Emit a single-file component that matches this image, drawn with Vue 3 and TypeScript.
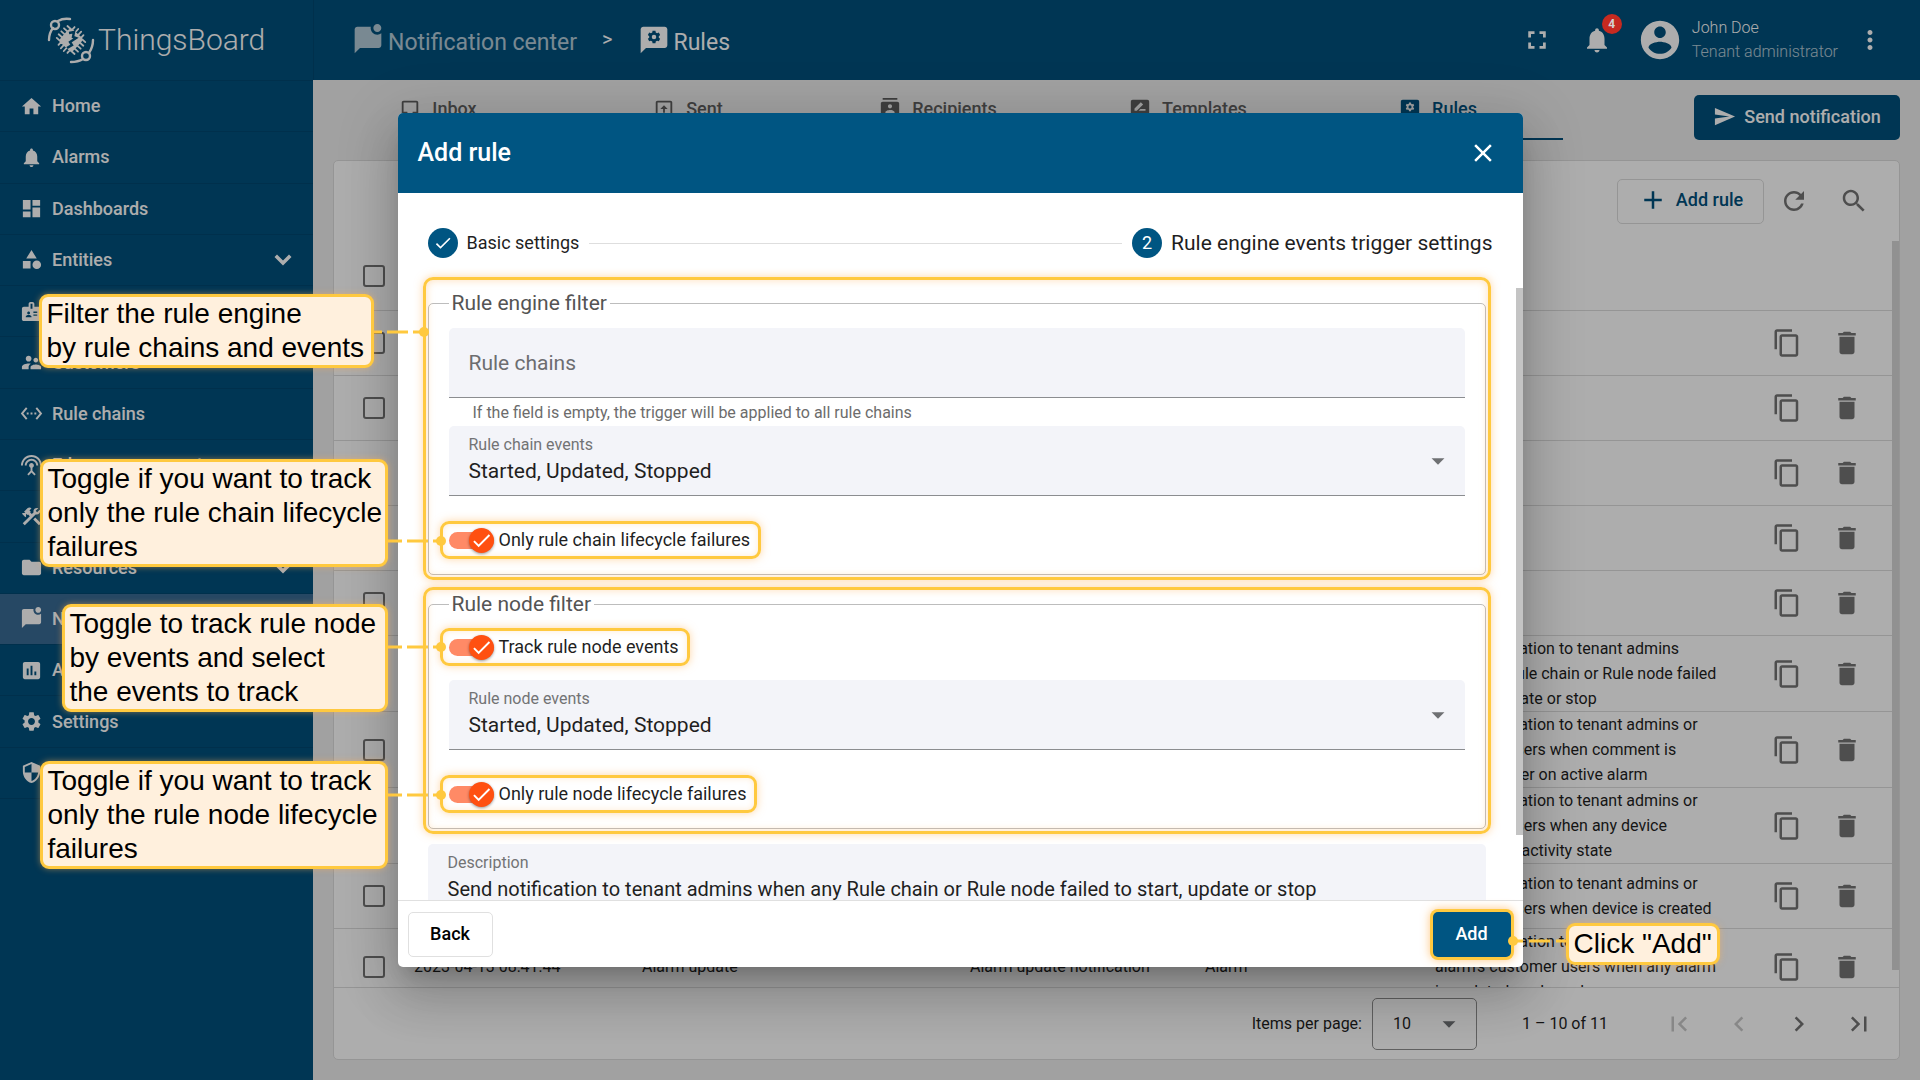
<script setup lang="ts">
import { h, ref } from 'vue'

const paths: Record<string, string> = {
  home: 'M10 20v-6h4v6h5v-8h3L12 3 2 12h3v8z',
  bell: 'M12 22c1.1 0 2-.9 2-2h-4c0 1.1.89 2 2 2zm6-6v-5c0-3.07-1.64-5.64-4.5-6.32V4c0-.83-.67-1.5-1.5-1.5s-1.5.67-1.5 1.5v.68C7.63 5.36 6 7.92 6 11v5l-2 2v1h16v-1l-2-2z',
  dashboard: 'M3 13h8V3H3v10zm0 8h8v-6H3v6zm10 0h8V11h-8v10zm0-18v6h8V3h-8z',
  category: 'M12 2l-5.5 9h11zM17.5 13a4.5 4.5 0 1 0 0 9 4.5 4.5 0 0 0 0-9zM3 13.500h8v8H3z',
  badge: 'M20 7h-5V4c0-1.1-.9-2-2-2h-2c-1.100 0-2 .9-2 2v3H4c-1.100 0-2 .9-2 2v11c0 1.100.9 2 2 2h16c1.100 0 2-.9 2-2V9c0-1.100-.9-2-2-2zM9 12c.83 0 1.500.67 1.500 1.500S9.830 15 9 15s-1.500-.67-1.500-1.500S8.170 12 9 12zm3 6H6v-.43c0-.6.36-1.150.92-1.390.65-.28 1.340-.43 2.080-.43s1.430.15 2.080.43c.55.24.92.78.92 1.390V18zm1-9h-2V4h2v5zm5 7.500h-4V15h4v1.500zm0-3h-4V12h4v1.500z',
  people: 'M16.500 12c1.380 0 2.490-1.120 2.490-2.500S17.880 7 16.500 7C15.120 7 14 8.120 14 9.500s1.120 2.500 2.500 2.500zM9 11c1.660 0 2.990-1.340 2.990-3S10.660 5 9 5C7.340 5 6 6.340 6 8s1.340 3 3 3zm7.500 3c-1.830 0-5.500.92-5.500 2.750V19h11v-2.250c0-1.830-3.670-2.750-5.500-2.750zM9 13c-2.330 0-7 1.170-7 3.500V19h7v-2.250c0-.85.33-2.340 2.370-3.470C10.500 13.100 9.660 13 9 13z',
  ethernet: 'M7.77 6.76L6.23 5.48.82 12l5.41 6.52 1.54-1.28L3.42 12l4.35-5.24zM7 13h2v-2H7v2zm10-2h-2v2h2v-2zm-6 2h2v-2h-2v2zm6.77-7.52l-1.54 1.28L20.58 12l-4.35 5.24 1.54 1.28L23.18 12l-5.41-6.52z',
  antenna: 'M12 5c-3.87 0-7 3.13-7 7h2c0-2.76 2.24-5 5-5s5 2.24 5 5h2c0-3.87-3.13-7-7-7zm1 9.29c.88-.39 1.5-1.26 1.5-2.29 0-1.38-1.12-2.5-2.5-2.5S9.5 10.62 9.5 12c0 1.02.62 1.9 1.5 2.29v3.3L7.59 21 9 22.41l3-3 3 3L16.41 21 13 17.59v-3.3zM12 1C5.93 1 1 5.93 1 12h2c0-4.97 4.03-9 9-9s9 4.03 9 9h2c0-6.07-4.93-11-11-11z',
  construction: 'M13.78 15.17l2.12-2.12 6 6-2.12 2.12zM17.5 10c1.93 0 3.5-1.57 3.5-3.5 0-.58-.16-1.12-.41-1.6l-2.7 2.7-1.49-1.49 2.7-2.7c-.48-.25-1.02-.41-1.6-.41C15.57 3 14 4.57 14 6.5c0 .41.08.8.21 1.16l-1.85 1.85-1.78-1.78.71-.71-1.41-1.41L12 3.49c-1.17-1.17-3.07-1.17-4.24 0L4.22 7.03l1.41 1.41H2.81L2.1 9.15l3.54 3.54.71-.71V9.15l1.41 1.41.71-.71 1.78 1.78-7.41 7.41 2.12 2.12L16.34 9.79c.36.13.75.21 1.16.21z',
  folder: 'M10 4H4c-1.1 0-1.99.9-1.99 2L2 18c0 1.1.9 2 2 2h16c1.1 0 2-.9 2-2V8c0-1.1-.9-2-2-2h-8l-2-2z',
  chat: 'M22 6.98V16c0 1.1-.9 2-2 2H6l-4 4V4c0-1.1.9-2 2-2h10.1c-.06.32-.1.66-.1 1 0 2.76 2.24 5 5 5 1.13 0 2.16-.39 3-1.02zM16 3c0 1.66 1.34 3 3 3s3-1.34 3-3-1.34-3-3-3-3 1.34-3 3z',
  chart: 'M19 3H5c-1.1 0-2 .9-2 2v14c0 1.1.9 2 2 2h14c1.1 0 2-.9 2-2V5c0-1.1-.9-2-2-2zM9 17H7v-7h2v7zm4 0h-2V7h2v10zm4 0h-2v-4h2v4z',
  settings: 'M19.14 12.94c.04-.3.06-.61.06-.94 0-.32-.02-.64-.07-.94l2.03-1.58c.18-.14.23-.41.12-.61l-1.92-3.32c-.12-.22-.37-.29-.59-.22l-2.39.96c-.5-.38-1.03-.7-1.62-.94l-.36-2.54c-.04-.24-.24-.41-.48-.41h-3.84c-.24 0-.43.17-.47.41l-.36 2.54c-.59.24-1.13.57-1.62.94l-2.39-.96c-.22-.08-.47 0-.59.22L2.74 8.87c-.12.21-.08.47.12.61l2.03 1.58c-.05.3-.09.63-.09.94s.02.64.07.94l-2.03 1.58c-.18.14-.23.41-.12.61l1.92 3.32c.12.22.37.29.59.22l2.39-.96c.5.38 1.03.7 1.62.94l.36 2.54c.05.24.24.41.48.41h3.84c.24 0 .44-.17.47-.41l.36-2.54c.59-.24 1.13-.56 1.62-.94l2.39.96c.22.08.47 0 .59-.22l1.92-3.32c.12-.22.07-.47-.12-.61l-2.01-1.58zM12 15.6c-1.98 0-3.6-1.62-3.6-3.6s1.62-3.6 3.6-3.6 3.6 1.62 3.6 3.6-1.62 3.6-3.6 3.6z',
  security: 'M12 1L3 5v6c0 5.55 3.84 10.74 9 12 5.16-1.26 9-6.45 9-12V5l-9-4zm0 10.99h7c-.53 4.12-3.28 7.79-7 8.94V12H5V6.3l7-3.11v8.8z',
  chevronDown: 'M12 17.5L3.500 9 6 6.500l6 6 6-6L20.500 9z',
  fullscreen: 'M5 5h5v2.200H7.200V10H5zM14 5h5v5h-2.200V7.200H14zM5 14h2.200v2.800H10V19H5zM16.800 14H19v5h-5v-2.200h2.800z',
  account: 'M12 2C6.48 2 2 6.48 2 12s4.48 10 10 10 10-4.48 10-10S17.52 2 12 2zm0 3c1.66 0 3 1.34 3 3s-1.34 3-3 3-3-1.34-3-3 1.34-3 3-3zm0 14.2c-2.5 0-4.71-1.28-6-3.22.03-1.99 4-3.08 6-3.08 1.99 0 5.97 1.09 6 3.08-1.29 1.94-3.5 3.22-6 3.22z',
  more: 'M12 8c1.1 0 2-.9 2-2s-.9-2-2-2-2 .9-2 2 .9 2 2 2zm0 2c-1.1 0-2 .9-2 2s.9 2 2 2 2-.9 2-2-.9-2-2-2zm0 6c-1.1 0-2 .9-2 2s.9 2 2 2 2-.9 2-2-.9-2-2-2z',
  send: 'M2.010 21L23 12 2.010 3 2 10l15 2-15 2z',
  add: 'M19 13h-6v6h-2v-6H5v-2h6V5h2v6h6v2z',
  refresh: 'M17.65 6.35C16.2 4.9 14.21 4 12 4c-4.42 0-7.99 3.58-7.99 8s3.57 8 7.99 8c3.73 0 6.84-2.55 7.73-6h-2.08c-.82 2.33-3.04 4-5.65 4-3.31 0-6-2.69-6-6s2.69-6 6-6c1.66 0 3.14.69 4.22 1.78L13 11h7V4l-2.35 2.35z',
  search: 'M15.5 14h-.79l-.28-.27C15.41 12.59 16 11.11 16 9.5 16 5.91 13.09 3 9.5 3S3 5.91 3 9.5 5.91 16 9.5 16c1.61 0 3.09-.59 4.23-1.57l.27.28v.79l5 4.99L20.49 19l-4.99-5zm-6 0C7.01 14 5 11.99 5 9.5S7.01 5 9.5 5 14 7.01 14 9.5 11.99 14 9.5 14z',
  copy: 'M16 1H4c-1.1 0-2 .9-2 2v14h2V3h12V1zm3 4H8c-1.1 0-2 .9-2 2v14c0 1.1.9 2 2 2h11c1.1 0 2-.9 2-2V7c0-1.1-.9-2-2-2zm0 16H8V7h11v14z',
  trash: 'M6 19c0 1.1.9 2 2 2h8c1.1 0 2-.9 2-2V7H6v12zM19 4h-3.5l-1-1h-5l-1 1H5v2h14V4z',
  inbox: 'M19 3H5c-1.1 0-2 .9-2 2v14c0 1.1.9 2 2 2h14c1.1 0 2-.9 2-2V5c0-1.1-.9-2-2-2zm0 12h-4c0 1.66-1.35 3-3 3s-3-1.34-3-3H5V5h14v10z',
  outbox: 'M19 3H5c-1.1 0-2 .9-2 2v14c0 1.1.9 2 2 2h14c1.1 0 2-.9 2-2V5c0-1.1-.9-2-2-2zm0 16H5V5h14v14zM11 16h2v-4h3l-4-4-4 4h3z',
  contacts: 'M20 0H4v2h16V0zM4 24h16v-2H4v2zM20 4H4c-1.1 0-2 .9-2 2v12c0 1.1.9 2 2 2h16c1.1 0 2-.9 2-2V6c0-1.1-.9-2-2-2zm-8 2.75c1.24 0 2.25 1.01 2.25 2.25s-1.01 2.25-2.25 2.25S9.75 10.24 9.75 9 10.76 6.75 12 6.75zM17 17H7v-1.5c0-1.67 3.33-2.5 5-2.5s5 .83 5 2.5V17z',
  draft: 'M20 2H4c-1.1 0-2 .9-2 2v18l4-4h14c1.100 0 2-.9 2-2V4c0-1.100-.9-2-2-2zM6 14v-2.500l6.900-6.900 2.500 2.500L8.500 14H6zm12 0h-7.500l2-2H18v2z',
  ruleChat: 'M20 2H4c-1.1 0-2 .9-2 2v18l4-4h14c1.1 0 2-.9 2-2V4c0-1.1-.9-2-2-2zM13.100 5l.2 1.300 1 .6 1.300-.5 1 1.900-1 .8v1.200l1 .8-1 1.900-1.300-.5-1 .6-.2 1.400h-2.200l-.2-1.400-1-.6-1.300.5-1-1.900 1-.8V9.100l-1-.8 1-1.900 1.300.5 1-.6.2-1.300zM12 8a1.700 1.700 0 1 0 0 3.400A1.700 1.700 0 0 0 12 8z',
  first: 'M18.41 16.59L13.82 12l4.59-4.59L17 6l-6 6 6 6zM6 6h2v12H6z',
  prev: 'M15.41 7.41L14 6l-6 6 6 6 1.41-1.41L10.83 12z',
  next: 'M10 6L8.59 7.41 13.17 12l-4.58 4.59L10 18l6-6z',
  last: 'M5.59 7.41L10.18 12l-4.59 4.59L7 18l6-6-6-6zM16 6h2v12h-2z',
  close: 'M19 6.41L17.59 5 12 10.59 6.41 5 5 6.41 10.59 12 5 17.59 6.41 19 12 13.41 17.59 19 19 17.59 13.41 12z',
  check: 'M9 16.17L4.830 12l-1.420 1.410L9 19 21 7l-1.410-1.410z',
  caret: 'M5 9l7 7 7-7z',
}

const Icon = (props: { name: string }) =>
  h('svg', { viewBox: '0 0 24 24', 'aria-hidden': 'true', fill: 'currentColor', 'fill-rule': 'evenodd' }, [
    h('path', { d: paths[props.name] }),
  ])

interface MenuItem { label: string; icon: string; open?: boolean; active?: boolean }

const menu: MenuItem[] = [
  { label: 'Home', icon: 'home' },
  { label: 'Alarms', icon: 'bell' },
  { label: 'Dashboards', icon: 'dashboard' },
  { label: 'Entities', icon: 'category', open: true },
  { label: 'Profiles', icon: 'badge' },
  { label: 'Customers', icon: 'people' },
  { label: 'Rule chains', icon: 'ethernet' },
  { label: 'Edge management', icon: 'antenna' },
  { label: 'Advanced', icon: 'construction' },
  { label: 'Resources', icon: 'folder', open: true },
  { label: 'Notification', icon: 'chat', active: true },
  { label: 'Api Usage', icon: 'chart' },
  { label: 'Settings', icon: 'settings' },
  { label: 'Security', icon: 'security' },
]

const tabs = [
  { label: 'Inbox', icon: 'inbox' },
  { label: 'Sent', icon: 'outbox' },
  { label: 'Recipients', icon: 'contacts' },
  { label: 'Templates', icon: 'draft' },
  { label: 'Rules', icon: 'ruleChat' },
]

interface Row { time?: string; name?: string; template?: string; trigger?: string; text?: string }

const rows: Row[] = [
  {}, {}, {}, {}, {},
  { text: 'Send notification to tenant admins when any Rule chain or Rule node failed to start, update or stop' },
  { text: 'Send notification to tenant admins or customer users when comment is added by user on active alarm' },
  { text: 'Send notification to tenant admins or customer users when any device changed its activity state' },
  { text: 'Send notification to tenant admins or customer users when device is created' },
  {
    time: '2023-04-13 08:41:44',
    name: 'Alarm update',
    template: 'Alarm update notification',
    trigger: 'Alarm',
    text: "Send notification to tenant admins or alarm's customer users when any alarm is updated or cleared",
  },
]

const chains = ref('')
const onlyChainFailures = ref(true)
const trackNodes = ref(true)
const onlyNodeFailures = ref(true)
const description = ref('Send notification to tenant admins when any Rule chain or Rule node failed to start, update or stop')
</script>

<template>
  <div class="app">
    <aside class="sidebar">
      <a href="#" class="logo">
        <svg class="logo-mark" viewBox="0 0 48 48" aria-hidden="true" fill="none" stroke="currentColor" stroke-width="2.4" stroke-linecap="round">
          <circle cx="8" cy="9" r="4" />
          <path d="M11 5Q16 2 23 3M6 12Q2 17 2 24" />
          <circle cx="39" cy="40" r="4" />
          <path d="M42 37Q46 31 46 24M36 43Q31 46 24 46" />
          <g transform="rotate(42 24 24)">
            <path d="M18 12v24M22 11v26M26 11v26M30 12v24M11 20h26M11 24h26M11 28h26M12 32h24M12 16h24" stroke-width="1.8" />
            <rect x="15" y="15" width="18" height="18" rx="4" fill="currentColor" stroke="none" />
          </g>
          <path d="M22 17l5-1-1 5 3 1-6 4 2 3-5 3" stroke="#00507c" stroke-width="2.4" stroke-linecap="butt" />
        </svg>
        <span>ThingsBoard</span>
      </a>
      <nav class="menu">
        <a v-for="item in menu" :key="item.label" href="#" class="menu-item" :class="{ active: item.active }">
          <Icon :name="item.icon" class="menu-icon" />
          <span class="menu-label">{{ item.label }}</span>
          <Icon v-if="item.open" name="chevronDown" class="menu-arrow" />
        </a>
      </nav>
    </aside>

    <div class="main">
      <header class="topbar">
        <nav class="crumbs">
          <a href="#" class="crumb parent"><Icon name="chat" class="crumb-icon" /><span>Notification center</span></a>
          <span class="crumb-sep">&gt;</span>
          <a href="#" class="crumb"><Icon name="ruleChat" class="crumb-icon" /><span>Rules</span></a>
        </nav>
        <div class="account">
          <button class="icon-btn" aria-label="Fullscreen"><Icon name="fullscreen" class="icon-lg" /></button>
          <button class="icon-btn bell" aria-label="Notifications">
            <Icon name="bell" class="icon-lg" /><span class="badge">4</span>
          </button>
          <Icon name="account" class="avatar" />
          <div class="user"><span>John Doe</span><span class="role">Tenant administrator</span></div>
          <button class="icon-btn" aria-label="More"><Icon name="more" class="icon-lg" /></button>
        </div>
      </header>

      <div class="tabbar">
        <nav class="tabs">
          <a v-for="tab in tabs" :key="tab.label" href="#" class="tab" :class="{ current: tab.label === 'Rules' }">
            <Icon :name="tab.icon" class="tab-icon" /><span>{{ tab.label }}</span>
          </a>
        </nav>
        <div class="tab-action">
          <button class="btn primary send"><Icon name="send" class="send-icon" />Send notification</button>
        </div>
      </div>

      <section class="card">
        <div class="card-tools">
          <button class="btn outline add-rule"><Icon name="add" class="icon-lg" />Add rule</button>
          <button class="icon-btn" aria-label="Refresh"><Icon name="refresh" class="icon-lg" /></button>
          <button class="icon-btn" aria-label="Search"><Icon name="search" class="icon-lg" /></button>
        </div>
        <div class="table-area">
          <table>
            <colgroup>
              <col class="c-check" /><col class="c-time" /><col class="c-name" /><col class="c-template" />
              <col class="c-trigger" /><col class="c-text" /><col class="c-actions" />
            </colgroup>
            <thead>
              <tr>
                <th><input type="checkbox" class="box" aria-label="Select all" /></th>
                <th></th><th></th><th></th><th></th>
                <th class="head-text">Description</th>
                <th></th>
              </tr>
            </thead>
            <tbody>
              <tr v-for="(row, i) in rows" :key="i">
                <td><input type="checkbox" class="box" :aria-label="`Select row ${i + 1}`" /></td>
                <td>{{ row.time }}</td>
                <td>{{ row.name }}</td>
                <td>{{ row.template }}</td>
                <td>{{ row.trigger }}</td>
                <td class="text">{{ row.text }}</td>
                <td>
                  <div class="row-actions">
                    <button class="icon-btn" aria-label="Copy"><Icon name="copy" class="icon-lg" /></button>
                    <button class="icon-btn" aria-label="Delete"><Icon name="trash" class="icon-lg" /></button>
                  </div>
                </td>
              </tr>
            </tbody>
          </table>
          <div class="table-scroll"></div>
        </div>
        <footer class="paginator">
          <label for="page-size">Items per page:</label>
          <div class="page-size">
            <select id="page-size"><option>10</option></select>
            <Icon name="caret" class="caret" />
          </div>
          <span class="range">1 – 10 of 11</span>
          <div class="pages">
            <button class="icon-btn" disabled aria-label="First page"><Icon name="first" class="icon-lg" /></button>
            <button class="icon-btn" disabled aria-label="Previous page"><Icon name="prev" class="icon-lg" /></button>
            <button class="icon-btn" aria-label="Next page"><Icon name="next" class="icon-lg" /></button>
            <button class="icon-btn" aria-label="Last page"><Icon name="last" class="icon-lg" /></button>
          </div>
        </footer>
      </section>
    </div>

    <div class="backdrop">
      <div class="dialog-wrap">
        <div class="dialog" role="dialog" aria-labelledby="dialog-title">
          <header class="dialog-head">
            <h2 id="dialog-title">Add rule</h2>
            <button class="icon-btn" aria-label="Close"><Icon name="close" class="icon-lg" /></button>
          </header>
          <div class="dialog-body">
            <div class="steps">
              <span class="step-dot"><Icon name="check" class="step-check" /></span>
              <span class="step-label">Basic settings</span>
              <span class="step-line"></span>
              <span class="step-dot">2</span>
              <span class="step-label current-step">Rule engine events trigger settings</span>
            </div>
            <div class="form">
              <div class="filter engine">
                <fieldset>
                  <legend>Rule engine filter</legend>
                  <div class="field">
                    <input v-model="chains" type="text" class="plain" placeholder="Rule chains" aria-label="Rule chains" />
                  </div>
                  <p class="hint">If the field is empty, the trigger will be applied to all rule chains</p>
                  <div class="field">
                    <label for="chain-events">Rule chain events</label>
                    <select id="chain-events"><option>Started, Updated, Stopped</option></select>
                    <Icon name="caret" class="caret" />
                  </div>
                  <label class="toggle low">
                    <span class="switch"><input v-model="onlyChainFailures" type="checkbox" /><Icon name="check" class="thumb" /></span>
                    <span>Only rule chain lifecycle failures</span>
                  </label>
                </fieldset>
              </div>
              <div class="filter node">
                <fieldset>
                  <legend>Rule node filter</legend>
                  <label class="toggle high">
                    <span class="switch"><input v-model="trackNodes" type="checkbox" /><Icon name="check" class="thumb" /></span>
                    <span>Track rule node events</span>
                  </label>
                  <div class="field">
                    <label for="node-events">Rule node events</label>
                    <select id="node-events"><option>Started, Updated, Stopped</option></select>
                    <Icon name="caret" class="caret" />
                  </div>
                  <label class="toggle low">
                    <span class="switch"><input v-model="onlyNodeFailures" type="checkbox" /><Icon name="check" class="thumb" /></span>
                    <span>Only rule node lifecycle failures</span>
                  </label>
                </fieldset>
              </div>
              <div class="field description">
                <label for="description">Description</label>
                <input id="description" v-model="description" type="text" />
              </div>
            </div>
            <div class="dialog-scroll"></div>
          </div>
          <footer class="dialog-foot">
            <button class="btn back">Back</button>
            <button class="btn primary add">Add</button>
          </footer>
        </div>

        <svg class="connectors" aria-hidden="true">
          <g stroke="#ffc93f" stroke-width="3">
            <path d="M-24 219H26" stroke-dasharray="8 5 21 5" />
            <path d="M-10 428H43" stroke-dasharray="14 5 21 5" />
            <path d="M-10 534H43" stroke-dasharray="14 5 21 5" />
            <path d="M-10 682H43" stroke-dasharray="14 5 21 5" />
            <path d="M1168 828H1115" stroke-dasharray="10 6 21 6" />
          </g>
          <g fill="#ffc93f">
            <circle cx="26" cy="219" r="5" />
            <circle cx="43" cy="428" r="5" />
            <circle cx="43" cy="534" r="5" />
            <circle cx="43" cy="682" r="5" />
            <circle cx="1115" cy="828" r="5" />
          </g>
        </svg>
        <div class="callout note-filter">Filter the rule engine<br />by rule chains and events</div>
        <div class="callout note-chain">Toggle if you want to track<br />only the rule chain lifecycle<br />failures</div>
        <div class="callout note-track">Toggle to track rule node<br />by events and select<br />the events to track</div>
        <div class="callout note-node">Toggle if you want to track<br />only the rule node lifecycle<br />failures</div>
        <div class="callout note-add">Click "Add"</div>
      </div>
    </div>
  </div>
</template>

<style>
body {
  margin: 0;
  overflow: hidden;
}
</style>

<style scoped>
* {
  box-sizing: border-box;
}
.app {
  position: relative;
  display: flex;
  height: 100vh;
  overflow: hidden;
  background: #eee;
  color: #1f1f1f;
  font: 400 18px/24px Roboto, sans-serif;
}
a {
  color: inherit;
  text-decoration: none;
}
button,
input,
select {
  margin: 0;
  font: inherit;
  color: inherit;
}
svg {
  display: block;
  flex: none;
}
.icon-btn {
  display: flex;
  padding: 0;
  border: 0;
  background: none;
}
.icon-lg {
  width: 30px;
  height: 30px;
}
.btn {
  display: flex;
  align-items: center;
  justify-content: center;
  height: 45px;
  padding: 0 0 2px;
  border: 1px solid transparent;
  border-radius: 5px;
  font-weight: 500;
}
.primary {
  background: #00507c;
  color: #fff;
}

/* sidebar */
.sidebar {
  flex: none;
  width: 313px;
  background: #00507c;
  color: #fff;
}
.logo {
  display: flex;
  align-items: center;
  gap: 3px;
  height: 80px;
  padding-left: 47px;
  font-size: 30px;
  font-weight: 300;
}
.logo-mark {
  width: 48px;
  height: 48px;
}
.menu {
  display: flex;
  flex-direction: column;
  height: 719px;
  border-bottom: 1px solid #004770;
}
.menu-item {
  display: flex;
  flex: 1;
  align-items: center;
  padding: 0 18px 0 20px;
  border-top: 1px solid #004770;
  font-weight: 500;
}
.menu-item.active {
  background: #396b94;
}
.menu-icon {
  width: 23px;
  height: 23px;
  margin-right: 9px;
}
.menu-label {
  flex: 1;
}
.menu-arrow {
  width: 24px;
  height: 24px;
}

/* top bar */
.main {
  display: flex;
  flex: 1;
  flex-direction: column;
  min-width: 0;
}
.topbar {
  display: flex;
  flex: none;
  align-items: center;
  justify-content: space-between;
  height: 80px;
  padding: 0 35px 0 38px;
  border-left: 1px solid #004770;
  background: #00507c;
  color: #fff;
}
.crumbs,
.crumb {
  display: flex;
  align-items: center;
}
.crumb {
  gap: 4px;
  font-size: 23px;
}
.crumb span {
  padding-top: 5px;
}
.parent {
  opacity: 0.7;
}
.crumb-icon {
  width: 32px;
  height: 32px;
}
.crumb-sep {
  margin: 0 25px;
  padding-bottom: 3px;
  font-size: 20px;
}
.account {
  display: flex;
  align-items: center;
}
.bell {
  position: relative;
  margin: 0 25px 0 30px;
}
.badge {
  position: absolute;
  top: -11px;
  right: -10px;
  z-index: 5;
  width: 20px;
  height: 20px;
  border-radius: 50%;
  background: #c62a20;
  color: #d2d2d2;
  font-size: 12px;
  font-weight: 700;
  line-height: 20px;
}
.avatar {
  width: 46px;
  height: 46px;
}
.user {
  display: flex;
  flex-direction: column;
  margin: 0 17px 0 9px;
  font-size: 16px;
  font-weight: 300;
}
.role {
  opacity: 0.7;
}

/* tabs */
.tabbar {
  display: flex;
  flex: none;
  height: 80px;
}
.tabs {
  display: flex;
  flex: 1;
  height: 60px;
}
.tab {
  display: flex;
  flex: 1;
  align-items: center;
  justify-content: center;
  gap: 11px;
  border-bottom: 2px solid transparent;
  color: #5e5e5e;
  font-weight: 500;
}
.current {
  border-color: #00507c;
  color: #00507c;
}
.tab-icon {
  width: 22px;
  height: 22px;
}
.tab-action {
  display: flex;
  flex: none;
  justify-content: flex-end;
  width: 357px;
  padding: 15px 20px 0 0;
}
.send {
  gap: 8px;
  width: 206px;
}
.send-icon {
  width: 23px;
  height: 23px;
}

/* rules card */
.card {
  display: flex;
  flex: 1;
  flex-direction: column;
  min-height: 0;
  margin: 0 20px 20px;
  border: 1px solid #dcdcdc;
  border-radius: 5px;
  background: #fff;
}
.card-tools {
  display: flex;
  flex: none;
  align-items: center;
  justify-content: flex-end;
  gap: 30px;
  height: 80px;
  padding-right: 30px;
  color: #737373;
}
.outline {
  border-color: #dcdcdc;
  background: none;
  color: #00507c;
}
.add-rule {
  gap: 8px;
  width: 147px;
  margin-right: -15px;
}
.table-area {
  display: flex;
  flex: 1;
  min-height: 0;
  overflow: hidden;
  border-bottom: 1px solid #dcdcdc;
}
table {
  flex: 1;
  table-layout: fixed;
  height: max-content;
  border-collapse: separate;
  border-spacing: 0;
  font-size: 16px;
  line-height: 25px;
}
.table-scroll {
  flex: none;
  width: 7px;
  height: 729px;
  background: #d6d6d6;
}
.c-check {
  width: 80px;
}
.c-time {
  width: 228px;
}
.c-name {
  width: 328px;
}
.c-template {
  width: 235px;
}
.c-trigger {
  width: 230px;
}
.c-actions {
  width: 135px;
}
th,
td {
  height: 65px;
  padding: 0;
  border-bottom: 1px solid #dcdcdc;
  text-align: left;
}
th {
  height: 70px;
}
.head-text {
  color: #00507c;
  font-weight: 500;
}
.text {
  padding-right: 38px;
}
.box {
  display: block;
  width: 22px;
  height: 22px;
  margin-left: 29px;
  border: 2px solid #737373;
  border-radius: 3px;
  appearance: none;
}
.row-actions {
  display: flex;
  gap: 30px;
  padding-left: 15px;
  color: #737373;
}
.paginator {
  display: flex;
  flex: none;
  align-items: center;
  height: 71px;
  padding-right: 25px;
  font-size: 16px;
}
.paginator > label {
  margin-left: auto;
}
.page-size {
  position: relative;
  width: 105px;
  height: 52px;
  margin: 0 45px 0 10px;
  border: 1px solid #8e8e8e;
  border-radius: 5px;
}
.page-size select {
  width: 100%;
  height: 100%;
  padding: 0 20px;
  border: 0;
  background: none;
  appearance: none;
}
.caret {
  position: absolute;
  top: 50%;
  right: 16px;
  width: 22px;
  height: 22px;
  margin-top: -11px;
  color: #6e7073;
  pointer-events: none;
}
.range {
  margin-right: 56px;
}
.pages {
  display: flex;
  gap: 30px;
  color: #737373;
}
.pages button:disabled {
  color: #c8c8c8;
}

/* dialog */
.backdrop {
  position: absolute;
  inset: 0;
  z-index: 1;
  display: flex;
  align-items: center;
  justify-content: center;
  background: rgba(0, 0, 0, 0.32);
}
.dialog-wrap {
  position: relative;
  width: 1125px;
  max-width: 90vw;
}
.dialog {
  display: flex;
  flex-direction: column;
  height: calc(100vh - 226px);
  overflow: hidden;
  border-radius: 5px;
  background: #fff;
  box-shadow: 0 14px 19px -9px rgba(0, 0, 0, 0.2), 0 30px 48px 4px rgba(0, 0, 0, 0.14), 0 11px 58px 10px rgba(0, 0, 0, 0.12);
}
.dialog-head {
  display: flex;
  flex: none;
  align-items: center;
  justify-content: space-between;
  height: 80px;
  padding: 0 25px 0 20px;
  background: #005582;
  color: #fff;
}
h2 {
  margin: 0;
  font-size: 25px;
  font-weight: 500;
}
.dialog-body {
  position: relative;
  flex: 1;
  min-height: 0;
  padding-top: 35px;
  overflow: hidden;
}
.steps {
  display: flex;
  align-items: center;
  height: 30px;
  padding: 0 30px;
}
.step-dot {
  display: flex;
  flex: none;
  align-items: center;
  justify-content: center;
  width: 30px;
  height: 30px;
  border-radius: 50%;
  background: #005582;
  color: #fff;
}
.step-check {
  width: 20px;
  height: 20px;
}
.step-label {
  margin-left: 9px;
}
.current-step {
  font-size: 21px;
}
.step-line {
  flex: 1;
  height: 1px;
  margin: 0 10px;
  background: #dedede;
}
.form {
  padding: 33px 37px 0 30px;
}
.filter {
  position: relative;
}
.filter::after {
  content: '';
  position: absolute;
  inset: -14px -5px -5px;
  border: 3px solid #ffc93f;
  border-radius: 10px;
  box-shadow: 0 0 8px rgba(255, 176, 80, 0.5), inset 0 0 8px rgba(255, 176, 80, 0.4);
  pointer-events: none;
}
.node {
  margin-top: 17px;
}
.node::after {
  top: -5px;
}
fieldset {
  min-width: 0;
  margin: 0;
  padding: 13px 20px 15px;
  border: 1px solid #bdbdbd;
  border-radius: 5px;
}
.node fieldset {
  padding-top: 12px;
}
legend {
  padding: 0 3px;
  color: #545454;
  font-size: 21px;
}
.field {
  position: relative;
  height: 70px;
  padding: 9px 20px 0;
  border-bottom: 1px solid #8b8d90;
  border-radius: 5px 5px 0 0;
  background: #f3f4f9;
}
.field label {
  display: block;
  color: #727375;
  font-size: 16px;
  line-height: 20px;
}
.field input,
.field select {
  display: block;
  width: 100%;
  height: 32px;
  padding: 0;
  border: 0;
  background: none;
  font-size: 21px;
  appearance: none;
}
.field .plain {
  height: 52px;
}
.plain::placeholder {
  color: #6c6d70;
  opacity: 1;
}
.hint {
  height: 28px;
  margin: 0;
  padding-left: 24px;
  color: #6c6c6c;
  font-size: 16px;
  line-height: 30px;
}
.toggle {
  display: flex;
  align-items: center;
  gap: 5px;
  width: max-content;
  height: 38px;
  margin-left: -9px;
  padding: 0 8px 0 6px;
  border: 3px solid #ffc93f;
  border-radius: 9px;
  box-shadow: 0 0 8px rgba(255, 176, 80, 0.5), inset 0 0 6px rgba(255, 176, 80, 0.25);
}
.low {
  margin-top: 25px;
}
.high {
  margin-bottom: 14px;
}
.switch {
  position: relative;
  display: flex;
  align-items: center;
  height: 25px;
}
.switch input {
  width: 45px;
  height: 17px;
  border-radius: 9px;
  background: #ff8a66;
  appearance: none;
}
.thumb {
  position: absolute;
  top: 0;
  right: 0;
  width: 25px;
  height: 25px;
  padding: 1px;
  border-radius: 50%;
  background: #ff5011;
  box-shadow: 0 1px 3px rgba(0, 0, 0, 0.4);
  color: #fff;
  pointer-events: none;
}
.description {
  margin-top: 15px;
}
.field.description input {
  font-size: 20px;
}
.dialog-scroll {
  position: absolute;
  top: 95px;
  right: 0;
  width: 7px;
  height: 547px;
  background: #c4c4c4;
}
.dialog-foot {
  display: flex;
  flex: none;
  align-items: center;
  justify-content: space-between;
  height: 67px;
  padding: 11px 12px 10px 10px;
  border-top: 1px solid #e0e0e0;
}
.back {
  width: 85px;
  border-color: #e0e0e0;
  background: #fff;
  color: #000;
}
.add {
  width: 78px;
  background: #005582;
  box-shadow: 0 0 0 3px #ffc93f, 0 0 10px 3px rgba(255, 176, 80, 0.7);
}

/* annotations */
.connectors {
  position: absolute;
  inset: 0;
  width: 100%;
  height: 100%;
  overflow: visible;
  fill: none;
  pointer-events: none;
}
.callout {
  position: absolute;
  padding: 0 5px;
  border: 3px solid #ffc93f;
  border-radius: 9px;
  background: #fff0dd;
  box-shadow: 0 0 6px rgba(255, 176, 80, 0.5);
  color: #000;
  font: 28px/34px "Liberation Sans", Arial, sans-serif;
  white-space: nowrap;
}
.note-filter {
  top: 181px;
  left: -359px;
  width: 335px;
}
.note-chain {
  top: 346px;
  left: -358px;
  width: 348px;
}
.note-track {
  top: 491px;
  left: -336px;
  width: 326px;
}
.note-node {
  top: 648px;
  left: -358px;
  width: 348px;
}
.note-add {
  top: 810px;
  left: 1168px;
  width: 154px;
  padding-top: 1px;
  padding-bottom: 1px;
}
</style>
